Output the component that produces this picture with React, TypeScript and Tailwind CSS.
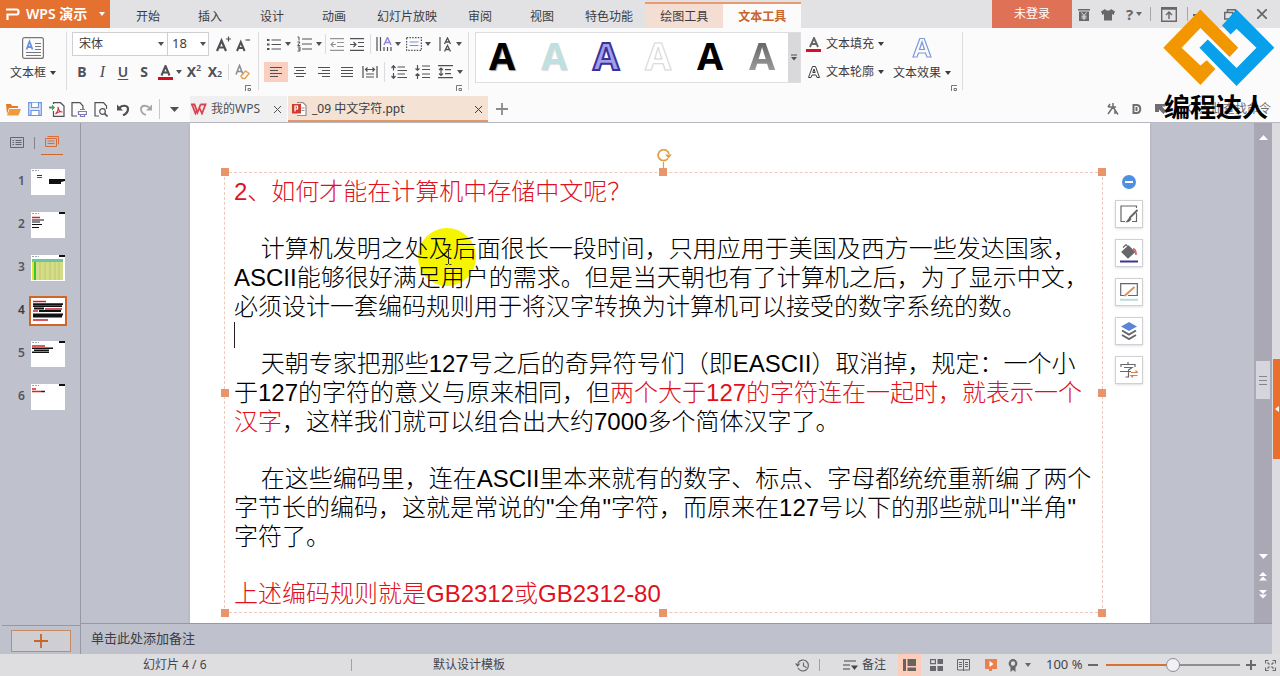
import React from "react";

const uiFont = "font-['Noto_Sans','Noto_Sans_CJK_SC',sans-serif]";

type SvgProps = { w?: number; h?: number; children: React.ReactNode; className?: string; sw?: number };

function Svg({ w = 16, h = 16, children, className = "", sw = 1.2 }: SvgProps) {
  return (
    <svg
      width={w}
      height={h}
      viewBox={`0 0 ${w} ${h}`}
      fill="none"
      stroke="currentColor"
      strokeWidth={sw}
      className={`shrink-0 ${className}`}
      aria-hidden="true"
    >
      {children}
    </svg>
  );
}

function Caret({ className = "" }: { className?: string }) {
  return (
    <Svg w={6} h={4} className={className}>
      <path d="M0 0h6L3 4z" fill="currentColor" stroke="none" />
    </Svg>
  );
}

function Tool({ label, className = "w-5", children }: { label: string; className?: string; children: React.ReactNode }) {
  return (
    <button type="button" aria-label={label} title={label} className={`flex h-5 shrink-0 items-center justify-center ${className}`}>
      {children}
    </button>
  );
}

function Divider({ className = "h-5 bg-[#dcdce0]" }: { className?: string }) {
  return <span className={`w-px shrink-0 ${className}`} />;
}

function Launcher() {
  return (
    <Svg w={6} h={6} sw={1} className="text-[#77777b]">
      <path d="M.5 6V.5H6M3 3.5h2.500v2H3z" />
    </Svg>
  );
}

const menuTabs = ["开始", "插入", "设计", "动画", "幻灯片放映", "审阅", "视图", "特色功能"];

function TitleBar() {
  return (
    <header className="flex h-7 bg-[#e2e2e4] text-xs text-[#3c3c40]">
      <button type="button" className="flex w-[110px] shrink-0 items-center bg-[#e4712f] pl-[6px] text-sm font-semibold text-white">
        <Svg w={14} h={12} sw={2.200}>
          <path d="M0 1.500h10.500a2 2 0 0 1 2 2v1a2 2 0 0 1-2 2H1.500v5.500" />
        </Svg>
        <span className="ml-[6px]">WPS 演示</span>
        <Caret className="ml-[12px]" />
      </button>
      <nav className="ml-[7px] flex shrink-0">
        {menuTabs.map((t) => (
          <button key={t} type="button" className={`pt-[6px] ${t.length > 2 ? "px-3" : "px-[19px]"}`}>
            {t}
          </button>
        ))}
        <button type="button" className="mt-[2px] border-t-2 border-[#e99a72] bg-[#f4ddd2] px-[15px] pt-[2px]">
          绘图工具
        </button>
        <button type="button" className="mt-[2px] border-t-2 border-[#e99a72] bg-[#fcfbfc] px-[15px] pt-[2px] font-semibold text-[#c8652b]">
          文本工具
        </button>
      </nav>
      <div className="ml-auto flex shrink-0 items-center text-[#68686c]">
        <button type="button" className="h-7 w-20 bg-[#de7156] text-xs text-white">
          未登录
        </button>
        <Tool label="积分" className="w-6">
          <Svg w={12} h={13}>
            <path d="M0 1h12v1.500H0zM1 3.500h10V13H1z" fill="currentColor" stroke="none" />
            <path d="m3.500 4.500 2.500 3 2.500-3M6 7.500V12M3.500 8.200h5M3.500 10h5" stroke="#e2e2e4" strokeWidth="1" />
          </Svg>
        </Tool>
        <Tool label="换肤" className="w-6">
          <Svg w={14} h={13}>
            <path d="M4 1C5 3 9 3 10 1l4 2.500-1.500 3.500L11 6v6.500H3V6L1.500 7 0 3.500z" fill="currentColor" stroke="none" />
          </Svg>
        </Tool>
        <Tool label="帮助" className="w-7 gap-[3px] text-[15px] font-bold">
          ?<Caret />
        </Tool>
        <Divider className="ml-[2px] h-[14px] bg-[#a6a6aa]" />
        <Tool label="功能区显示选项" className="ml-2 w-5">
          <Svg w={16} h={15} sw={1.400}>
            <path d="M.7.7h14.600v13.600H.7zM0 2h16M8 12V5M5 8l3-3 3 3" />
          </Svg>
        </Tool>
        <Divider className="ml-2 h-[14px] bg-[#a6a6aa]" />
        <Tool label="最小化" className="w-5">
          <Svg w={10} h={4} sw={2}><path d="M0 3h10" /></Svg>
        </Tool>
        <Tool label="还原" className="ml-3 w-5">
          <Svg w={12} h={11} sw={1.500}><path d="M.7 3.500h8v6.500h-8zM3.500 3V.8h8v7H9" /></Svg>
        </Tool>
        <Tool label="关闭" className="ml-3 mr-[8px] w-5">
          <Svg w={10} h={10} sw={1.800}><path d="m0 0 10 10M10 0 0 10" /></Svg>
        </Tool>
      </div>
    </header>
  );
}

function Lines({ d }: { d: string }) {
  return (
    <Svg w={14} h={12} sw={1.200}>
      <path d={d} />
    </Svg>
  );
}

const styleLetters = [
  "text-black [text-shadow:1px_1px_1px_#999]",
  "text-[#bfe0de] [text-shadow:1px_1px_1px_#ddd]",
  "text-[#a29eea] [-webkit-text-stroke:2px_#38329a]",
  "text-white [-webkit-text-stroke:1px_#d6d6d8]",
  "text-black",
  "bg-linear-to-b from-[#555] to-[#aaa] bg-clip-text text-transparent",
];

function Ribbon() {
  return (
    <section aria-label="文本工具" className="flex h-[68px] bg-[#fcfbfc] text-xs text-[#505055]">
      <button type="button" className="flex w-[66px] shrink-0 flex-col items-center pt-[9px]">
        <Svg w={22} h={22} sw={1.200} className="text-[#77777b]">
          <rect x=".6" y=".6" width="20.800" height="20.800" rx="2" />
          <path d="M13 6.500h6M13 9.500h6M13 12.500h6M4 15.500h15M4 18.500h15" strokeWidth="1" />
          <path d="m4.500 12.500 3-8 3 8M5.500 10h4" stroke="#6d93dc" strokeWidth="1.800" />
        </Svg>
        <span className="mt-[6px] flex items-center gap-1 text-[#3c3c40]">
          文本框
          <Caret />
        </span>
      </button>
      <Divider className="mt-1 h-[58px] bg-[#dcdce0]" />

      <div className="ml-[5px] flex w-[181px] shrink-0 flex-col pt-1">
        <div className="flex h-6 items-center">
          <span className="relative flex h-6 w-24 shrink-0 items-center border border-[#cfcfd3] bg-white">
            <select aria-label="字体" className="h-full w-full appearance-none bg-transparent pl-[6px] text-[#3c3c40]">
              <option>宋体</option>
            </select>
            <Caret className="pointer-events-none absolute right-[3px]" />
          </span>
          <span className="relative -ml-px flex h-6 w-[42px] shrink-0 items-center border border-[#cfcfd3] bg-white">
            <select aria-label="字号" className="h-full w-full appearance-none bg-transparent pl-1 text-[13px] text-[#3c3c40]">
              <option>18</option>
            </select>
            <Caret className="pointer-events-none absolute right-[2px]" />
          </span>
          <Tool label="增大字号" className="ml-1 w-5">
            <Svg w={15} h={16} sw={2.200}>
              <path d="m1 15 4.500-10.500L10 15M2.800 11.500h5.500" />
              <path d="M10 3h5M12.500.5v5" strokeWidth="1.200" />
            </Svg>
          </Tool>
          <Tool label="减小字号">
            <Svg w={14} h={15} sw={2}>
              <path d="m1 14 3.800-9L8.600 14M2.500 11h4.500" />
              <path d="M9.500 3H14" strokeWidth="1.200" />
            </Svg>
          </Tool>
        </div>
        <div className="mt-[6px] flex h-5 items-center text-sm">
          <Tool label="加粗"><b>B</b></Tool>
          <Tool label="倾斜" className="w-[21px]"><i className="font-['Liberation_Serif',serif] text-base">I</i></Tool>
          <Tool label="下划线"><span className="font-semibold underline underline-offset-2">U</span></Tool>
          <Tool label="阴影" className="w-[22px]"><b>S</b></Tool>
          <Tool label="字体颜色">
            <Svg w={15} h={15} sw={2.100}>
              <path d="m3.500 10.500 4-9.500 4 9.500M5 7.500h5" />
              <path d="M0 13.500h15" stroke="#d9091c" strokeWidth="3" />
            </Svg>
          </Tool>
          <Tool label="更多颜色" className="w-2"><Caret /></Tool>
          <Tool label="上标" className="w-[22px]">
            <b>X</b><sup className="text-[9px] font-semibold">2</sup>
          </Tool>
          <Tool label="下标">
            <b>X</b><sub className="text-[9px] font-semibold">2</sub>
          </Tool>
          <Divider className="mx-[3px] h-4 bg-[#dcdce0]" />
          <Tool label="清除格式">
            <Svg w={15} h={16} sw={1.600}>
              <path d="m1 10.500 3.500-9L8 10.500M2 7.500h5" stroke="#8d8d92" />
              <path d="m6 12 4.500-5L14 9.500 10 14.500H7.500z" stroke="#e2a556" strokeWidth="1.500" />
            </Svg>
          </Tool>
        </div>
        <div className="mt-[3px] flex justify-end pr-[2px]"><Launcher /></div>
      </div>
      <Divider className="ml-[5px] mt-1 h-[58px] bg-[#dcdce0]" />

      <div className="ml-[5px] flex w-[200px] shrink-0 flex-col pt-[6px]">
        <div className="flex h-5 items-center">
          <Tool label="项目符号">
            <Svg w={14} h={13}>
              <path d="M4.500 2h9.500M4.500 6.500H14M4.500 11H14" />
              <path d="M0 2h2.500M0 6.500h2.500M0 11h2.500" strokeWidth="2.200" />
            </Svg>
          </Tool>
          <Tool label="项目符号样式" className="w-2"><Caret /></Tool>
          <Tool label="编号" className="ml-[2px] w-5">
            <Svg w={15} h={16}>
              <path d="M5 3h10M5 8h10M5 13h10" />
              <path d="M.5 1h1.500v3.500M.5 6h2.500L.7 9.500h2.500M.5 11h2.500v4H.5M1 13h2" strokeWidth="1" />
            </Svg>
          </Tool>
          <Tool label="编号样式" className="w-[10px]"><Caret /></Tool>
          <Divider className="mx-[1px] h-5 bg-[#dcdce0]" />
          <Tool label="减少缩进">
            <Svg w={14} h={13} className="text-[#95959a]">
              <path d="M0 .7h14M7 4.500h7M7 8.500h7M0 12.300h14M1 6.500h5M3.500 4 1 6.500 3.500 9" />
            </Svg>
          </Tool>
          <Tool label="增加缩进">
            <Svg w={14} h={13}>
              <path d="M0 .7h14M8 4.500h6M8 8.500h6M0 12.300h14M0 6.500h6M3.500 4 6 6.500 3.500 9" />
            </Svg>
          </Tool>
          <Divider className="mx-[3px] h-5 bg-[#dcdce0]" />
          <Tool label="文字方向">
            <Svg w={16} h={15}>
              <path d="M1 0v14M4.500 0v14M8 10v4M11.500 10v4M15 10v4" />
              <path d="m8 8 3.500-7.500L15 8M9.500 5.500h4" stroke="#9089d6" strokeWidth="1.500" />
            </Svg>
          </Tool>
          <Tool label="文字方向选项" className="w-2"><Caret /></Tool>
          <Tool label="对齐文本" className="ml-[2px] w-5">
            <Svg w={16} h={14}>
              <path d="M.6.600h14.800v12.800H.6z" strokeDasharray="1.500 1.300" />
              <path d="M3.500 5h9M3.500 8.500h9" stroke="#6d93dc" />
            </Svg>
          </Tool>
          <Tool label="对齐文本选项" className="w-2"><Caret /></Tool>
          <Tool label="竖排" className="ml-[3px] w-5">
            <Svg w={13} h={15}>
              <path d="M1 0v14" />
              <path d="m5.500 7 3-6 3 6M6.500 5h4M5.500 14.500l3-6 3 6M6.500 12.500h4" strokeWidth="1.300" />
            </Svg>
          </Tool>
          <Tool label="竖排选项" className="w-2"><Caret /></Tool>
        </div>
        <div className="mt-2 flex h-5 items-center">
          <Tool label="左对齐" className="w-6 bg-[#fbcfbf]"><Lines d="M1 1.500h12M1 4.500h8M1 7.500h12M1 10.500h8" /></Tool>
          <Tool label="居中" className="w-6"><Lines d="M1 1.500h12M3 4.500h8M1 7.500h12M3 10.500h8" /></Tool>
          <Tool label="右对齐" className="w-6"><Lines d="M1 1.500h12M5 4.500h8M1 7.500h12M5 10.500h8" /></Tool>
          <Tool label="两端对齐" className="w-[22px]"><Lines d="M1 1.500h12M1 4.500h12M1 7.500h12M1 10.500h12" /></Tool>
          <Tool label="分散对齐" className="w-6">
            <Svg w={16} h={12}>
              <path d="M1 0v12M15 0v12M4 8h8M4 11h8M3.500 3.500h9M5.500 1.500l-2 2 2 2M10.500 1.500l2 2-2 2" />
            </Svg>
          </Tool>
          <Divider className="mx-[2px] h-5 bg-[#dcdce0]" />
          <Tool label="行距" className="w-6">
            <Svg w={16} h={14}>
              <path d="M6.500 2H14M6.500 5.500H16M6.500 9H14M6.500 12.500H16M2.500 1v4.500M.5 3l2-2.300 2 2.300M2.500 8v5M.5 11l2 2.300 2-2.300" />
            </Svg>
          </Tool>
          <Tool label="段落间距" className="w-6">
            <Svg w={16} h={14}>
              <path d="M7 1h8M7 4.500h8M7 9h8M7 12.500h8M2.500 0v5M.5 3.500l2 1.800 2-1.800M2.500 14V9M.5 10.500l2-1.800 2 1.800" />
            </Svg>
          </Tool>
          <Tool label="增减行距" className="w-[21px]">
            <Svg w={15} h={14}>
              <path d="M0 .7h15M7 4.700h6M7 8.700h6M0 12.700h15M3 3v7.500M1 5l2-2 2 2M1 8.500l2 2 2-2" />
            </Svg>
          </Tool>
          <Tool label="行距选项" className="w-2"><Caret /></Tool>
        </div>
        <div className="mt-[3px] flex justify-end pr-[2px]"><Launcher /></div>
      </div>
      <Divider className="ml-[4px] mt-1 h-[58px] bg-[#dcdce0]" />

      <div className="ml-[6px] mt-1 flex h-[51px] w-[326px] shrink-0 border border-[#dedee2] bg-white">
        <div className="flex flex-1">
          {styleLetters.map((s, i) => (
            <button
              key={i}
              type="button"
              aria-label={`艺术字样式 ${i + 1}`}
              className="flex flex-1 items-center justify-center pb-1 font-['Open_Sans',sans-serif] text-[38px] leading-[45px] font-bold"
            >
              <span className={s}>A</span>
            </button>
          ))}
        </div>
        <Tool label="更多样式" className="h-full w-3 bg-[#d9d9dc]">
          <Svg w={6} h={7} sw={1}>
            <path d="M0 1h6" />
            <path d="M0 3h6L3 6.500z" fill="currentColor" stroke="none" />
          </Svg>
        </Tool>
      </div>

      <div className="ml-[5px] flex w-[87px] shrink-0 flex-col pt-[6px] text-[#3c3c40]">
        <button type="button" className="flex h-5 items-center gap-1">
          <Svg w={16} h={15} sw={1.900} className="text-[#66666a]">
            <path d="m4 10 4-9 4 9M5.500 7h5" />
            <path d="M0 13.500h15" stroke="#df0b2b" strokeWidth="3" />
          </Svg>
          文本填充
          <Caret />
        </button>
        <button type="button" className="mt-2 flex h-5 items-center gap-1">
          <Svg w={16} h={13} sw={1}>
            <path d="M2.500 11.500 6.500.500h3l4 11h-2.500l-1-2.500H6l-1 2.500zM6.800 6.500h2.400L8 3z" />
          </Svg>
          文本轮廓
          <Caret />
        </button>
      </div>
      <button type="button" className="flex shrink-0 flex-col items-center pt-[9px] text-[#3c3c40]">
        <Svg w={20} h={22} sw={1.200} className="text-[#7b98dc]">
          <path d="M1 20 7.800 1.500h4.400L19 20h-4l-1.500-4h-7L5 20zM7.500 12.500h5L10 5z" />
        </Svg>
        <span className="mt-[6px] flex items-center gap-1">
          文本效果
          <Caret />
        </span>
      </button>
      <div className="flex items-end pb-[5px]"><Launcher /></div>
      <Divider className="ml-[5px] mt-1 h-[58px] bg-[#dcdce0]" />
    </section>
  );
}

function DocumentBar() {
  return (
    <div className="flex h-[27px] items-center border-b border-[#b9b9c2] bg-[#fcfbfc] text-xs text-[#505055]">
      <div className="flex shrink-0 items-center pl-[2px]">
        <Tool label="打开" className="w-[22px]">
          <Svg w={15} h={13}>
            <path d="M0 1h5l1 2h6v2H3L1 11z" fill="#e77c22" stroke="none" />
            <path d="M3.500 6H15l-2.500 6.500H1z" fill="#f09a3e" stroke="none" />
          </Svg>
        </Tool>
        <Tool label="保存" className="w-[22px]">
          <Svg w={14} h={14} className="text-[#6d93dc]">
            <path d="M.700.7h12.600v12.600H.7z" fill="#dfe9fb" />
            <path d="M3.500.7v4.800h7V.7M3 13V8.500h8V13" fill="#fff" />
          </Svg>
        </Tool>
        <Tool label="输出为PDF" className="w-[22px]">
          <Svg w={16} h={15}>
            <path d="M4.500 2V.7h7L15 4v10.300H4.500V9" />
            <path d="M6.500 12c2-2 3-5 2.500-7 .5 3 2 5 4.500 5-2-.5-5 0-7 2z" stroke="#d2353c" />
            <path d="M0 4.500h3V2.500L6 5.500l-3 3V6.500H0z" fill="#4aa04e" stroke="none" />
          </Svg>
        </Tool>
        <Tool label="打印" className="w-[22px]">
          <Svg w={16} h={15}>
            <path d="M6 14H1V.7h8L12 4v3" />
            <path d="M9 7.500h5M7.500 9.500v3h8v-3zM9.500 12v2.500h4V12" stroke="#7e79b8" />
          </Svg>
        </Tool>
        <Tool label="打印预览" className="w-[22px]">
          <Svg w={14} h={15}>
            <path d="M5 14H1V.7h8.500L12.500 4v3" />
            <circle cx="8.500" cy="9.500" r="2.800" />
            <path d="m10.500 11.500 3 3" strokeWidth="1.700" />
          </Svg>
        </Tool>
        <Tool label="撤销" className="w-[22px]">
          <Svg w={13} h={13} sw={2.200}>
            <path d="M2 5.500C5 1.500 11 2 11 6c0 3-2 5-5 6.500" />
            <path d="M0 1.500v6h6z" fill="currentColor" stroke="none" />
          </Svg>
        </Tool>
        <Tool label="恢复" className="w-[22px]">
          <Svg w={13} h={13} sw={1.800} className="text-[#a5a5aa]">
            <path d="M11 5.500C8 1.500 2 2 2 6c0 3 2 5 5 6" />
            <path d="M13 1.500v6H7z" fill="currentColor" stroke="none" />
          </Svg>
        </Tool>
        <Divider className="ml-[3px] h-5 bg-[#c8c8cc]" />
        <Tool label="自定义快速访问工具栏" className="ml-1 w-5">
          <Svg w={9} h={5}><path d="M0 0h9L4.500 5z" fill="currentColor" stroke="none" /></Svg>
        </Tool>
      </div>
      <div className="ml-[6px] flex h-[26px] w-[97px] shrink-0 items-center bg-[#f1f0f1]">
        <Svg w={17} h={12} sw={1.800} className="text-[#dc4150]">
          <path d="M1 1.500h3.500l3 8 3-8M2 1.500l3.500 9 1.500-4M10.500 1.500H15.500L12 10.500 9.500 5" />
        </Svg>
        <span className="ml-[4px]">我的WPS</span>
        <Tool label="关闭我的WPS" className="ml-auto w-5">
          <Svg w={7} h={7} sw={1}><path d="m0 0 7 7M7 0 0 7" /></Svg>
        </Tool>
      </div>
      <div className="ml-[1px] flex h-[26px] w-[200px] shrink-0 items-center border-b-2 border-[#e29868] bg-[#f4e2d4] pt-[2px] text-[#3c3c40]">
        <Svg w={15} h={14} className="ml-1 text-[#8d8d92]">
          <path d="M5 .6h6L14 3.500v10H5" fill="#fff" />
          <path d="M9.500 6h3M9.500 8.500h3" />
          <path d="M0 2h9v9.500H0z" fill="#cf3b30" stroke="none" />
          <path d="M3 9.500V4h2.500v3H3" stroke="#fff" />
        </Svg>
        <span className="ml-[5px]">_09 中文字符.ppt</span>
        <Tool label="关闭文档" className="ml-auto w-5">
          <Svg w={7} h={7} sw={1}><path d="m0 0 7 7M7 0 0 7" /></Svg>
        </Tool>
      </div>
      <Tool label="新建标签" className="ml-1 w-5">
        <Svg w={12} h={12} sw={1.800} className="text-[#8a8a8f]"><path d="M6 0v12M0 6h12" /></Svg>
      </Tool>
      <div className="ml-auto flex shrink-0 items-center pr-[9px] text-[#6d6d72]">
        <Tool label="云服务" className="w-6">
          <Svg w={12} h={12} sw={1.500}><path d="M6 0v4M1 4h8M6 4 1 11M6 4l5 7.500M3 1l-2 3M8 7v4" /></Svg>
        </Tool>
        <Tool label="文档助手" className="w-6">
          <Svg w={10} h={10} sw={2}><path d="M1.500 1h3c5 0 5 8 0 8h-3zM4.500 3v4" /></Svg>
        </Tool>
        <Tool label="工具" className="w-6">
          <Svg w={11} h={10}><path d="M0 0h10v2.500H7L11 7 8.500 10 4 5.500V8H0z" fill="currentColor" stroke="none" /></Svg>
        </Tool>
        <button type="button" className="ml-[14px] flex items-center">
          <Svg w={12} h={12}><circle cx="5" cy="5" r="3.500" /><path d="m7.500 7.500 3.500 3.500" /></Svg>
          点此查找命令
        </button>
      </div>
    </div>
  );
}

function Watermark() {
  return (
    <div className="pointer-events-none absolute top-[9px] right-[5px] flex flex-col items-center">
      <svg width="112" height="78" viewBox="20 26 338 234" aria-hidden="true">
        <path d="M21 142 133 27l114 115-26 28-88-87-57 59 57 54 19-16 26 26-45 49z" fill="#f29700" />
        <path d="m242 27 114 115-114 116-112-116 25-25 87 86 60-61-60-57-18 17-26-27z" fill="#08a0ea" />
      </svg>
      <span className="mt-[5px] mr-[6px] font-['Noto_Sans_CJK_SC',sans-serif] text-[26px] leading-[28px] font-bold text-black">编程达人</span>
    </div>
  );
}

function Thumb({ n }: { n: number }) {
  return (
    <svg width="34" height="26" viewBox="0 0 34 26" aria-hidden="true" className={n === 4 ? "bg-white outline-2 outline-[#cf6526]" : "bg-white"}>
      {n !== 4 && <path d="M1 1.500h7" stroke="#9aa" strokeWidth="1" strokeDasharray="2 1" />}
      {n !== 4 && n !== 1 && <path d="M28 1h6" stroke="#111" strokeWidth="2" />}
      {n === 1 && (
        <g>
          <path d="M6 6.500h5" stroke="#333" />
          <path d="M6 8.500h5" stroke="#d22" />
          <path d="M18 10h16v2l-4 1v2H18z" fill="#111" />
        </g>
      )}
      {n === 2 && (
        <g>
          <path d="M1 5.500h8" stroke="#d22" strokeWidth="1.500" />
          <path d="M1 8h12M1 10h8M1 12.500h10M1 15.500h7" stroke="#111" strokeWidth="1.200" />
        </g>
      )}
      {n === 3 && (
        <g>
          <path d="M1 4h31v21H1z" fill="#d5dc86" />
          <path d="M1 4h31v3H1z" fill="#68c6a0" />
          <path d="M1 7h2v18H1z" fill="#e8e232" />
          <path d="M3 7h2v18H3z" fill="#35c43c" />
          <path d="M9 7v18M14 7v18M19 7v18M24 7v18M28 7v18" stroke="#b3bd68" strokeWidth=".7" />
        </g>
      )}
      {n === 4 && (
        <g>
          <path d="M2 3.500h13M14 11h17M2 13h5M2 22h15" stroke="#c8202c" strokeWidth="1.400" />
          <path d="M2 6.200h30M2 8.200h29M3 10.500h10M8 13h22M2 16.500h30M2 18.500h29" stroke="#111" strokeWidth="1.800" />
        </g>
      )}
      {n === 5 && (
        <g>
          <path d="M1 5h13" stroke="#d22" strokeWidth="1.500" />
          <path d="M1 7.200h21M3 9.200h15M1 11.200h17" stroke="#111" strokeWidth="1.600" />
        </g>
      )}
      {n === 6 && (
        <g>
          <path d="M1 5h4M1 7.500h9" stroke="#d22" strokeWidth="1.500" />
          <path d="M10 7.500h4" stroke="#222" strokeWidth="1.500" />
        </g>
      )}
    </svg>
  );
}

function SlidePanel() {
  return (
    <aside className="flex w-[81px] shrink-0 flex-col border-r border-[#9698a4]">
      <div className="flex h-8 items-center pt-[7px] pl-[10px]">
        <Tool label="大纲" className="w-[14px]">
          <Svg w={14} h={11} sw={1} className="text-[#66666e]">
            <path d="M.5.5h13v10H.5zM5.500 3.500h6M5.500 5.500h6M5.500 7.500h6M2.500 3.500h1.500M2.500 5.500h1.500M2.500 7.500h1.500" />
          </Svg>
        </Tool>
        <Divider className="ml-[10px] h-3 bg-[#83838c]" />
        <Tool label="幻灯片" className="ml-[6px] h-[25px] w-[22px] border-b border-[#cf6526]">
          <Svg w={14} h={12} sw={1} className="text-[#d96c38]">
            <path d="M.5 2.500h11v8H.5zM2.500.5h11v8M2.500 5h7M2.500 7.500h7" />
          </Svg>
        </Tool>
      </div>
      <ol className="mt-[14px] flex flex-col gap-[17px] pl-[18px]">
        {[1, 2, 3, 4, 5, 6].map((n) => (
          <li key={n}>
            <button type="button" aria-label={`幻灯片 ${n}`} className="flex h-[26px] items-center">
              <span className={`w-[13px] pb-[2px] text-left text-xs font-semibold ${n === 4 ? "text-[#3c3c44]" : "text-[#55555e]"}`}>{n}</span>
              <Thumb n={n} />
            </button>
          </li>
        ))}
      </ol>
      <div className="mt-auto ml-[2px] h-[29px] border-t border-[#9698a4] pt-[4px] pl-[9px]">
        <button type="button" aria-label="新建幻灯片" className="flex h-[22px] w-[60px] items-center justify-center border border-[#c98a62] bg-[#cfcfd3] text-[#c8652b]">
          <Svg w={14} h={14} sw={1.800}><path d="M7 0v14M0 7h14" /></Svg>
        </button>
      </div>
    </aside>
  );
}

const handles = [
  "-top-[5px] -left-1",
  "-top-[5px] left-[434px]",
  "-top-[5px] -right-1",
  "top-[216px] -left-1",
  "top-[216px] -right-1",
  "-bottom-[5px] -left-1",
  "-bottom-[5px] left-[434px]",
  "-bottom-[5px] -right-1",
];

function TextFrame() {
  return (
    <div className="relative mt-[49px] ml-[34px] h-[441px] w-[879px] shrink-0 border border-dashed border-[#ecc9bb] pt-1 pl-[9px]">
      <span className="absolute top-[55px] left-[193px] h-[58px] w-[58px] rounded-full bg-[#f6f500]" />
      {handles.map((h) => (
        <span key={h} className={`absolute h-2 w-2 bg-[#e8956c] ${h}`} />
      ))}
      <Svg w={16} h={20} sw={1.800} className="absolute -top-6 left-[431px] text-[#dfa144]">
        <path d="M12 9.500A5.500 5.500 0 1 1 13 5" />
        <path d="M9 5.500h7l-3.500 4z" fill="currentColor" stroke="none" />
        <path d="M7.500 13v7" strokeWidth="1.200" />
      </Svg>
      <div className="relative font-['Liberation_Sans','Noto_Sans_CJK_SC',sans-serif] text-2xl leading-[29px] font-light whitespace-pre text-black">
        <p className="text-[#e01020]">2、如何才能在计算机中存储中文呢？</p>
        <p className="mt-7">{"    计算机发明之处及后面很长一段时间，只用应用于美国及西方一些发达国家，"}</p>
        <p>ASCII能够很好满足用户的需求。但是当天朝也有了计算机之后，为了显示中文，</p>
        <p>必须设计一套编码规则用于将汉字转换为计算机可以接受的数字系统的数。</p>
        <div className="h-7 py-px"><span className="block h-full w-px bg-[#222]" /></div>
        <p>{"    天朝专家把那些127号之后的奇异符号们（即EASCII）取消掉，规定：一个小"}</p>
        <p>
          于127的字符的意义与原来相同，但<span className="text-[#e01020]">两个大于127的字符连在一起时，就表示一个</span>
        </p>
        <p>
          <span className="text-[#e01020]">汉字</span>，这样我们就可以组合出大约7000多个简体汉字了。
        </p>
        <p className="mt-7">{"    在这些编码里，连在ASCII里本来就有的数字、标点、字母都统统重新编了两个"}</p>
        <p>字节长的编码，这就是常说的"全角"字符，而原来在127号以下的那些就叫"半角"</p>
        <p>字符了。</p>
        <p className="mt-7 text-[#e01020]">上述编码规则就是GB2312或GB2312-80</p>
      </div>
      <Svg w={7} h={16} sw={1} className="absolute top-[76px] left-[220px] text-[#333]">
        <path d="M.5.5h2l1 1 1-1h2M3.500 1v14M.500 15.500h2l1-1 1 1h2" />
      </Svg>
    </div>
  );
}

function SideButton({ label, children }: { label: string; children: React.ReactNode }) {
  return (
    <button type="button" aria-label={label} className="flex h-7 w-7 items-center justify-center border border-[#d0d0d4] bg-white text-[#66666b] shadow-sm">
      {children}
    </button>
  );
}

function SideTools() {
  return (
    <div className="mt-[52px] ml-[12px] flex shrink-0 flex-col items-center gap-[11px]">
      <button type="button" aria-label="收起" className="flex h-[14px] w-[14px] items-center justify-center rounded-full bg-[#4f8fe0]">
        <span className="h-[2px] w-2 bg-white" />
      </button>
      <SideButton label="样式">
        <Svg w={18} h={18}>
          <path d="M16.500 8v8.500H12M5 16.500H1V1h15.500v2" />
          <path d="m17.500 5-8 8" strokeWidth="2" />
          <path d="M9.500 12 5.500 17.500c2.500 0 5-1 6-3.500z" fill="currentColor" stroke="none" />
        </Svg>
      </SideButton>
      <SideButton label="填充">
        <Svg w={18} h={19}>
          <path d="M2 8 8.500 2l6 6-6.500 6z" fill="currentColor" />
          <path d="M3 3.500 6 .700l4 4" />
          <path d="M13 5c2 0 3 2 3 6" stroke="#cf6a72" strokeWidth="1.800" />
          <path d="M0 17.500h18" stroke="#3a3596" strokeWidth="2" />
        </Svg>
      </SideButton>
      <SideButton label="轮廓">
        <Svg w={18} h={18}>
          <path d="M5 12.500H.7V.7h16.600v11.800H8" />
          <path d="m14.500 4-10 9" stroke="#e0925c" strokeWidth="2" />
          <path d="M0 16.800h18" stroke="#b9dcdc" strokeWidth="2" />
        </Svg>
      </SideButton>
      <SideButton label="图层">
        <Svg w={16} h={18} sw={2}>
          <path d="m8 0 8 4.500L8 9 0 4.500z" fill="#5b86d8" stroke="none" />
          <path d="m1 8.500 7 4 7-4M1 13l7 4 7-4" />
        </Svg>
      </SideButton>
      <SideButton label="文字">
        <Svg w={18} h={16}>
          <path d="M1 5V2.500h14V5M8 0v2M4 5.500h8L8.500 8v7H5.500M0 9.500h11" />
          <path d="M11 10.500h6.500l-2-2M17.500 13.500H11l2 2" stroke="#df7f45" />
        </Svg>
      </SideButton>
    </div>
  );
}

function VerticalScroll() {
  return (
    <div className="flex w-[18px] shrink-0 flex-col items-center bg-[#aaa8b5] py-3 text-white">
      <Svg w={9} h={5}><path d="M4.500 0 9 5H0z" fill="currentColor" stroke="none" /></Svg>
      <span className="flex-[10]" />
      <span className="flex h-[38px] w-[14px] items-center justify-center bg-[#d5d5dd] text-[#85858e]">
        <Svg w={8} h={9} sw={1}><path d="M0 .500h8M0 4.500h8M0 8.500h8" /></Svg>
      </span>
      <span className="flex-[7]" />
      <Svg w={9} h={5}><path d="M0 0h9L4.500 5z" fill="currentColor" stroke="none" /></Svg>
      <Svg w={8} h={9} className="mt-[13px]"><path d="m4 0 4 4H0zM4 4.500l4 4H0z" fill="currentColor" stroke="none" /></Svg>
      <Svg w={8} h={9} className="mt-[9px] mb-[12px]"><path d="M0 0h8L4 4zM0 4.500h8l-4 4z" fill="currentColor" stroke="none" /></Svg>
    </div>
  );
}

function StatusBar() {
  return (
    <footer className="flex h-[22px] items-center bg-[#dedee0] text-xs text-[#44444a]">
      <span className="w-[208px] shrink-0 pl-[143px] whitespace-nowrap">幻灯片 4 / 6</span>
      <span className="w-[143px]" />
      <Divider className="h-3 bg-[#a0a0a6]" />
      <span className="ml-[81px] shrink-0">默认设计模板</span>
      <div className="ml-auto flex shrink-0 items-center text-[#68686c]">
        <Tool label="历史记录" className="w-[22px]">
          <Svg w={15} h={13}>
            <path d="M3 4a5.500 5.500 0 1 1 0 5M8.500 3.500v3.500l3 1.500" />
            <path d="M0 4.500h5.500L2.500 8z" fill="currentColor" stroke="none" />
          </Svg>
        </Tool>
        <Divider className="mx-[5px] h-3 bg-[#a0a0a6]" />
        <button type="button" className="ml-[18px] flex items-center gap-1 text-[#44444a]">
          <Svg w={15} h={11}>
            <path d="M1 1h12M0 5h7M0 9h7" />
            <path d="M8 5.500h7L11.500 10z" fill="currentColor" stroke="none" />
          </Svg>
          备注
        </button>
        <Tool label="普通视图" className="ml-[12px] h-[22px] w-[23px] bg-[#fbcdba]">
          <Svg w={13} h={12}><path d="M0 0h3v12H0zM4.500 0H13v7H4.500zM4.500 8.500H13V12H4.500z" fill="#6b625e" stroke="none" /></Svg>
        </Tool>
        <Tool label="幻灯片浏览" className="ml-[4px] w-[22px]">
          <Svg w={13} h={12}>
            <path d="M7.500 0H13v5H7.500zM0 7h6v5H0zM7.500 7H13v5H7.500z" fill="currentColor" stroke="none" />
            <path d="M.6.600h4.800v4H.6z" />
          </Svg>
        </Tool>
        <Tool label="阅读视图" className="ml-[5px] w-[22px]">
          <Svg w={13} h={12} sw={1}><path d="M.5.500h12v10.500H.5zM6.500.500V12M2 3.500h3M2 5.500h3M2 7.500h3M8 3.500h3M8 5.500h3M8 7.500h3" /></Svg>
        </Tool>
        <Tool label="放映" className="ml-[6px] w-[22px]">
          <Svg w={12} h={12}>
            <path d="M0 0h12v10H7v2H4v-2H0z" fill="#e8814f" stroke="none" />
            <path d="m4.500 2 4 3-4 3z" fill="#fff" stroke="none" />
          </Svg>
        </Tool>
        <Tool label="标记" className="w-[22px]">
          <Svg w={10} h={13}>
            <circle cx="5" cy="4.500" r="3.300" strokeWidth="2.200" />
            <path d="M2.500 8h5v5L5 11l-2.500 2z" fill="currentColor" stroke="none" />
          </Svg>
        </Tool>
        <Tool label="标记选项" className="w-2"><Caret /></Tool>
        <span className="ml-[14px] w-[38px] text-[13px] whitespace-nowrap text-[#44444a]">100 %</span>
        <Tool label="缩小" className="w-[18px]">
          <Svg w={10} h={2} sw={2}><path d="M0 1h10" /></Svg>
        </Tool>
        <input
          type="range"
          aria-label="显示比例"
          min={0}
          max={200}
          defaultValue={100}
          className="mx-1 h-[14px] w-[134px] appearance-none bg-[linear-gradient(to_right,#d9702f_50%,#8d8d92_50%)] bg-[length:100%_2px] bg-center bg-no-repeat [&::-webkit-slider-thumb]:h-[14px] [&::-webkit-slider-thumb]:w-[14px] [&::-webkit-slider-thumb]:appearance-none [&::-webkit-slider-thumb]:rounded-full [&::-webkit-slider-thumb]:border [&::-webkit-slider-thumb]:border-[#8d8d92] [&::-webkit-slider-thumb]:bg-[#f1f1f5]"
        />
        <Tool label="放大" className="w-[14px]">
          <Svg w={10} h={10} sw={2}><path d="M5 0v10M0 5h10" /></Svg>
        </Tool>
        <Tool label="适应窗口" className="mr-[1px] ml-[3px] w-[18px]">
          <Svg w={11} h={11}><path d="M.5 3.500v-3h3M7.500.500h3v3M10.500 7.500v3h-3M3.500 10.500h-3v-3M2.500 2.500l2 2M8.500 2.500l-2 2M8.500 8.500l-2-2M2.500 8.500l2-2" /></Svg>
        </Tool>
      </div>
    </footer>
  );
}

export default function App() {
  return (
    <div className={`relative flex min-h-screen flex-col overflow-hidden bg-[#bfc1cd] ${uiFont}`}>
      <TitleBar />
      <Ribbon />
      <DocumentBar />
      <main className="flex flex-1">
        <SlidePanel />
        <div className="flex min-w-0 flex-1 flex-col">
          <div className="flex flex-1">
            <div className="flex min-w-0 flex-1 justify-center pl-[5px]">
              <article className="flex w-[960px] shrink-0 items-start bg-white shadow">
                <TextFrame />
                <SideTools />
              </article>
            </div>
            <VerticalScroll />
          </div>
          <div className="relative flex h-[31px] items-center border-t border-[#9698a4] bg-[#bfc1cd]">
            <input
              aria-label="备注"
              placeholder="单击此处添加备注"
              className="ml-[10px] w-full bg-transparent text-[13px] outline-none placeholder:text-[#3c3c44]"
            />
          </div>
        </div>
        <div className="flex w-2 shrink-0 flex-col bg-[#dcdce0]">
          <span className="flex-[236]" />
          <button type="button" aria-label="展开任务窗格" className="ml-[1px] flex h-[100px] items-center justify-center bg-[#e8702c] text-white">
            <Svg w={4} h={6}><path d="M4 0v6L0 3z" fill="currentColor" stroke="none" /></Svg>
          </button>
          <span className="flex-[195]" />
        </div>
      </main>
      <StatusBar />
      <Watermark />
    </div>
  );
}
